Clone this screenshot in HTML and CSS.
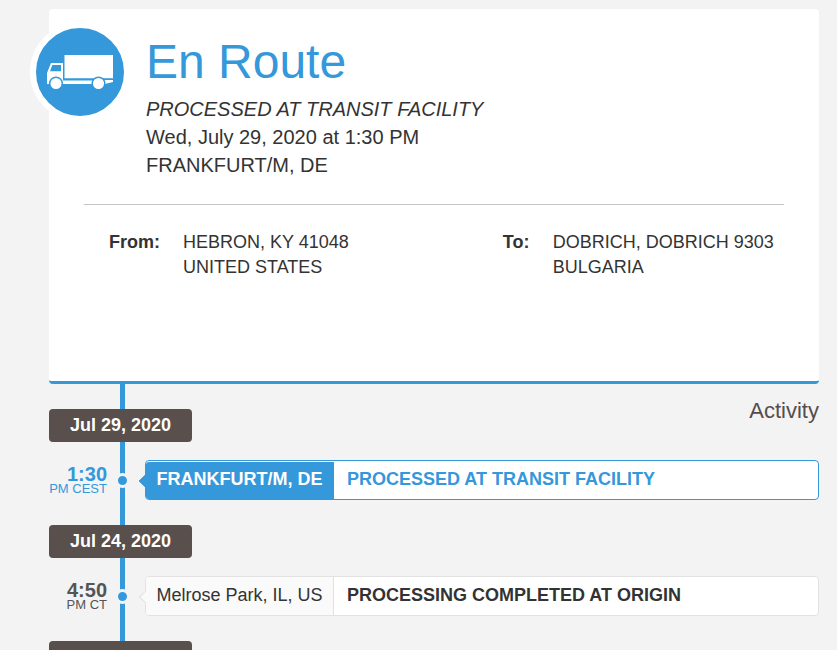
FILE: index.html
```html
<!DOCTYPE html>
<html lang="en">
<head>
    <meta charset="UTF-8">
    <meta name="viewport" content="width=device-width, initial-scale=1.0">
    <title>Shipment Tracking</title>
    <link rel="stylesheet" href="styles.css">
</head>
<body>
    <main class="tracking">
        <!-- Current status -->
        <section class="status-card">
            <div class="status-icon">
                <svg viewBox="0 0 88 88" width="88" height="88" aria-hidden="true">
                    <path class="truck" d="M28.500 27H77v23.300H28.500z"/>
                    <path class="truck" fill-rule="evenodd" d="M15 35h12v17.500h43V56H11V45zM16.300 37l-2.300 6.300h11V37z"/>
                    <path class="truck" d="M68 52h9v2l-8 2z"/>
                    <circle class="wheel" cx="20" cy="55.500" r="6.300"/>
                    <circle class="wheel" cx="62.500" cy="55.500" r="6.300"/>
                </svg>
            </div>
            <div class="status-text">
                <h1>En Route</h1>
                <p><em>PROCESSED AT TRANSIT FACILITY</em></p>
                <p>Wed, July 29, 2020 at 1:30 PM</p>
                <p>FRANKFURT/M, DE</p>
            </div>
            <div class="route">
                <div class="place">
                    <strong>From:</strong>
                    <p>HEBRON, KY 41048<br>UNITED STATES</p>
                </div>
                <div class="place">
                    <strong>To:</strong>
                    <p>DOBRICH, DOBRICH 9303<br>BULGARIA</p>
                </div>
            </div>
        </section>

        <!-- Activity timeline -->
        <section class="timeline">
            <div class="day">
                <h3 class="date">Jul 29, 2020</h3>
                <h2>Activity</h2>
            </div>
            <div class="event current">
                <div class="time"><b>1:30</b><span>PM CEST</span></div>
                <span class="dot"></span>
                <div class="box">
                    <div class="location">FRANKFURT/M, DE</div>
                    <div class="message">PROCESSED AT TRANSIT FACILITY</div>
                </div>
            </div>
            <div class="day">
                <h3 class="date">Jul 24, 2020</h3>
            </div>
            <div class="event">
                <div class="time"><b>4:50</b><span>PM CT</span></div>
                <span class="dot"></span>
                <div class="box">
                    <div class="location">Melrose Park, IL, US</div>
                    <div class="message">PROCESSING COMPLETED AT ORIGIN</div>
                </div>
            </div>
            <div class="day">
                <h3 class="date">Jul 23, 2020</h3>
            </div>
        </section>
    </main>
</body>
</html>
```

FILE: styles.css
```css
* {
    box-sizing: border-box;
}
body {
    font-family: "Liberation Sans", Arial, sans-serif;
    font-size: 18px;
    color: #333;
    background-color: #f3f3f3;
    margin: 0;
}
h1, h2, h3, p {
    margin: 0;
}
.tracking {
    padding: 9px 18px 0 49px;
}

/* Status card */
.status-card {
    position: relative;
    background-color: #fff;
    border-bottom: 3px solid #3498db;
    border-radius: 4px;
    padding: 25px 35px 101px;
}
.status-icon {
    position: absolute;
    left: -19px;
    top: 13px;
    border: 6px solid #fff;
    border-radius: 50%;
    background-color: #3498db;
}
.status-icon svg {
    display: block;
}
.truck {
    fill: #fff;
}
.wheel {
    fill: #fff;
    stroke: #3498db;
    stroke-width: 1.5;
}
.status-text {
    padding: 0 0 25px 62px;
    border-bottom: 1px solid #c4c4c4;
    font-size: 20px;
    line-height: 28px;
}
.status-text h1 {
    color: #3498db;
    font-size: 48px;
    font-weight: normal;
    line-height: 56px;
    margin-bottom: 5px;
}
.route {
    display: grid;
    grid-template-columns: 7fr 5fr;
    padding: 25px 0 0 25px;
    line-height: 25px;
}
.place {
    display: flex;
    min-width: 0;
}
.place strong {
    width: 74px;
    flex-shrink: 0;
}
.place:last-child strong {
    width: 50px;
}
.place p {
    white-space: nowrap;
}

/* Timeline */
.timeline {
    background: linear-gradient(#3498db, #3498db) 71px 0 / 5px 100% no-repeat;
    padding-top: 25px;
}
.day {
    display: flex;
    justify-content: space-between;
    height: 33px;
    margin-bottom: 18px;
}
.day h2 {
    color: #554d4d;
    font-size: 22px;
    font-weight: normal;
    line-height: 28px;
    margin-top: -12px;
}
.date {
    width: 143px;
    background-color: #594f4d;
    border-radius: 4px;
    color: #fff;
    font-size: 18px;
    line-height: 32px;
    text-align: center;
}
.event {
    display: flex;
    align-items: center;
    margin-bottom: 25px;
}
.time {
    width: 58px;
    color: #555;
    text-align: right;
    white-space: nowrap;
}
.time b, .time span {
    display: block;
}
.time b {
    font-size: 20px;
    line-height: 16px;
}
.time span {
    font-size: 13px;
    line-height: 13px;
}
.dot {
    width: 15px;
    height: 15px;
    margin: 0 15px 0 8px;
    border: 3px solid #f3f3f3;
    border-radius: 50%;
    background-color: #3498db;
}
.box {
    position: relative;
    display: flex;
    flex: 1;
    height: 40px;
    background-color: #fff;
    border: 1px solid #e2e2e2;
    border-radius: 4px;
    line-height: 36px;
    white-space: nowrap;
}
.box::before {
    content: "";
    position: absolute;
    left: -5px;
    top: 15px;
    width: 9px;
    height: 9px;
    background-color: #fafafa;
    border: 1px solid #e2e2e2;
    border-width: 0 0 1px 1px;
    transform: rotate(45deg);
}
.location {
    width: 188px;
    background-color: #fafafa;
    border-right: 1px solid #e2e2e2;
    border-radius: 3px 0 0 3px;
    text-align: center;
    position: relative;
}
.message {
    padding-left: 13px;
    font-weight: bold;
}
.current .time, .current .message {
    color: #3498db;
}
.current .box {
    border-color: #3498db;
}
.current .box::before, .current .location {
    background-color: #3498db;
    border-color: #3498db;
}
.current .location {
    margin-top: 1px;
    line-height: 35px;
    color: #fff;
    font-weight: bold;
}
```
